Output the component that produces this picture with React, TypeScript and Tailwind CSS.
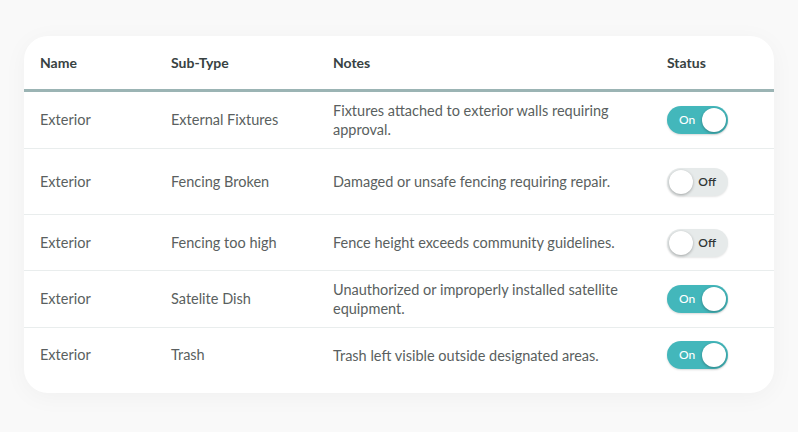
const rows = [
  { name: 'Exterior', sub: 'External Fixtures', notes: 'Fixtures attached to exterior walls requiring approval.', on: true, h: 'h-[56px]' },
  { name: 'Exterior', sub: 'Fencing Broken', notes: 'Damaged or unsafe fencing requiring repair.', on: false, h: 'h-[65px]' },
  { name: 'Exterior', sub: 'Fencing too high', notes: 'Fence height exceeds community guidelines.', on: false, h: 'h-[55px]' },
  { name: 'Exterior', sub: 'Satelite Dish', notes: 'Unauthorized or improperly installed satellite equipment.', on: true, h: 'h-[56px]' },
  { name: 'Exterior', sub: 'Trash', notes: 'Trash left visible outside designated areas.', on: true, h: 'h-[54px]' },
];

const Toggle = ({ on }: { on: boolean }) =>
  on ? (
    <div className="flex h-[28px] w-[61px] items-center justify-between rounded-full bg-[#43b7bb] pl-[12px] pr-[2px] shadow-[0_1px_2px_rgba(0,0,0,0.15)]">
      <span className="text-[12px] font-medium text-white">On</span>
      <span className="h-[24px] w-[24px] rounded-full bg-white shadow-[0_1px_3px_rgba(0,0,0,0.3)]" />
    </div>
  ) : (
    <div className="flex h-[28px] w-[61px] items-center justify-between rounded-full bg-[#e6eaea] pl-[2px] pr-[12px] shadow-[0_1px_2px_rgba(0,0,0,0.1)]">
      <span className="h-[24px] w-[24px] rounded-full bg-white shadow-[0_1px_3px_rgba(0,0,0,0.3)]" />
      <span className="text-[12px] font-semibold text-[#2f3535]">Off</span>
    </div>
  );

const App = () => {
  return (
    <div
      className="h-[432px] w-[798px] bg-[#f9f9f9] pl-[24px] pt-[36px]"
      style={{ fontFamily: 'Lato, "Open Sans", sans-serif' }}
    >
      <div className="h-[357px] w-[750px] overflow-hidden rounded-[24px] bg-white shadow-[0_4px_24px_rgba(0,0,0,0.04)]">
        <div className="flex h-[53px] items-center pl-[16px] text-[14px] font-bold text-[#384242]">
          <div className="w-[131px]">Name</div>
          <div className="w-[162px]">Sub-Type</div>
          <div className="w-[334px]">Notes</div>
          <div>Status</div>
        </div>
        <div className="h-[3px] bg-[#9bb4b4]" />
        {rows.map((r, i) => (
          <div key={i}>
            {i > 0 && <div className="h-px bg-[#e9eded]" />}
            <div className={`flex items-center pl-[16px] text-[14.5px] text-[#5a5f60] ${r.h}`}>
              <div className="w-[131px]">{r.name}</div>
              <div className="w-[162px]">{r.sub}</div>
              <div className="w-[334px] pr-[30px] leading-[19px]">{r.notes}</div>
              <Toggle on={r.on} />
            </div>
          </div>
        ))}
      </div>
    </div>
  );
};

export default App;
